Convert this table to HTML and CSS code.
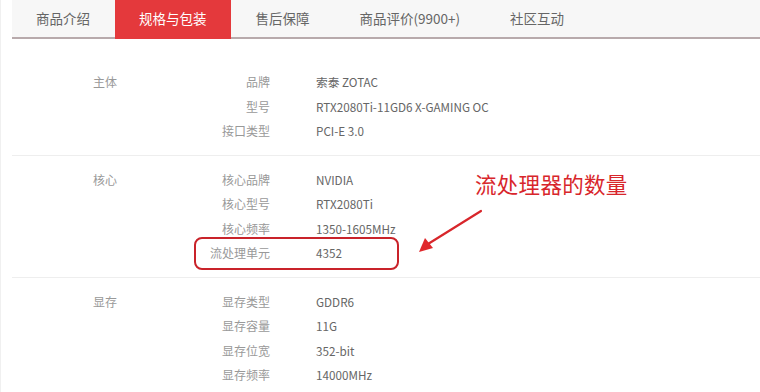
FILE: index.html
```html
<!DOCTYPE html>
<html lang="zh">
<head>
<meta charset="utf-8">
<link rel="stylesheet" href="styles.css">
</head>
<body>
<div class="page">
  <nav class="tabs">
    <span class="tab">商品介绍</span>
    <span class="tab active">规格与包装</span>
    <span class="tab">售后保障</span>
    <span class="tab">商品评价(9900+)</span>
    <span class="tab">社区互动</span>
  </nav>
  <div class="specs">
    <section class="group first">
      <div class="gname">主体</div>
      <dl class="items">
        <div class="row"><dt>品牌</dt><dd>索泰 ZOTAC</dd></div>
        <div class="row"><dt>型号</dt><dd>RTX2080Ti-11GD6 X-GAMING OC</dd></div>
        <div class="row"><dt>接口类型</dt><dd>PCI-E 3.0</dd></div>
      </dl>
    </section>
    <section class="group">
      <div class="gname">核心</div>
      <dl class="items">
        <div class="row"><dt>核心品牌</dt><dd>NVIDIA</dd></div>
        <div class="row"><dt>核心型号</dt><dd>RTX2080Ti</dd></div>
        <div class="row"><dt>核心频率</dt><dd>1350-1605MHz</dd></div>
        <div class="row marked"><dt>流处理单元</dt><dd>4352</dd><span class="ring"></span></div>
      </dl>
    </section>
    <section class="group">
      <div class="gname">显存</div>
      <dl class="items">
        <div class="row"><dt>显存类型</dt><dd>GDDR6</dd></div>
        <div class="row"><dt>显存容量</dt><dd>11G</dd></div>
        <div class="row"><dt>显存位宽</dt><dd>352-bit</dd></div>
        <div class="row"><dt>显存频率</dt><dd>14000MHz</dd></div>
      </dl>
    </section>
  </div>
  <div class="note">流处理器的数量</div>
  <svg class="arrow" width="80" height="50" viewBox="0 0 80 50">
    <line x1="70" y1="4" x2="17" y2="37" stroke="#d8262b" stroke-width="2.2" stroke-linecap="round"/>
    <polygon points="8,45 14,31 22,41" fill="#e0282c"/>
  </svg>
</div>
</body>
</html>
```
FILE: styles.css
```css
html, body {
  margin: 0;
  padding: 0;
  background: #fff;
}
.page {
  position: relative;
  width: 760px;
  height: 392px;
  overflow: hidden;
  font-family: "Noto Sans CJK SC", "Liberation Sans", sans-serif;
  border-left: 1px solid #f0f0f0;
  box-sizing: border-box;
  padding-left: 11px;
}
.tabs {
  display: flex;
  height: 37px;
  background: #f7f7f7;
  border-bottom: 2px solid #b8aaac;
}
.tab {
  padding: 0 25px;
  line-height: 37px;
  font-size: 13.5px;
  color: #666;
  white-space: nowrap;
}
.tab:first-child {
  padding-left: 24px;
}
.tab.active {
  background: #e4393c;
  color: #fff;
  height: 39px;
  padding: 0 24px;
}
.specs {
  padding-top: 19px;
}
.group {
  display: flex;
  padding: 12px 0 11px;
  border-bottom: 1px solid #eee;
}
.gname {
  width: 188px;
  padding-left: 81px;
  box-sizing: border-box;
  font-size: 12px;
  line-height: 24.5px;
  color: #999;
}
.items {
  margin: 0;
}
.row {
  position: relative;
  display: flex;
  height: 24.5px;
  line-height: 24.5px;
  font-size: 12px;
}
.row dt {
  width: 70px;
  text-align: right;
  color: #999;
}
.row dd {
  margin: 0 0 0 46px;
  color: #666;
  font-size: 11.7px;
}
.ring {
  position: absolute;
  left: -6px;
  top: -4px;
  width: 201px;
  height: 29px;
  border: 2px solid #c9232a;
  border-radius: 8px;
}
.note {
  position: absolute;
  left: 474px;
  top: 169px;
  font-size: 21.5px;
  line-height: 30px;
  color: #d8262b;
  letter-spacing: 0.3px;
}
.arrow {
  position: absolute;
  left: 410px;
  top: 207px;
}
```
